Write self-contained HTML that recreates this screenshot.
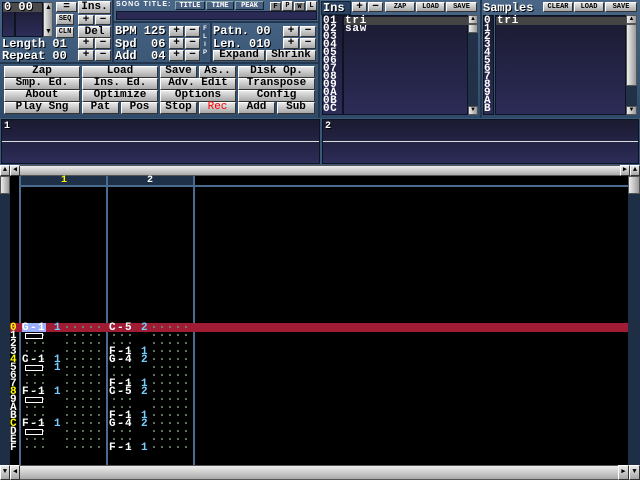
<!DOCTYPE html><html><head><style>
*{margin:0;padding:0;box-sizing:border-box}
body{width:640px;height:480px;background:#000;position:relative;overflow:hidden;font-family:"Liberation Sans",sans-serif}
div{position:absolute}
.pn{background:linear-gradient(#4a6788,#2f4a68);}
.b{background:linear-gradient(#e8e8e8,#a8a8a8);border:1px solid;border-color:#fff #333 #333 #fff;font-weight:bold;font-size:11px;text-align:center;color:#000;line-height:9px;font-family:"Liberation Mono",monospace;letter-spacing:0px}
.s{font-size:7px;line-height:8px}
.t{color:#fff;font-weight:bold;font-size:12px;font-family:"Liberation Mono",monospace;text-shadow:1px 1px 0 #000;line-height:12px;white-space:pre}
.lst{background:linear-gradient(#1a1a30,#2c2c58);border:1px solid #0c1424}
.m{font-family:"Liberation Mono",monospace;font-size:12px;line-height:8px;letter-spacing:.8px;white-space:pre;color:#fff;font-weight:bold}
.sb{background:linear-gradient(90deg,#eee,#999);border:1px solid #555}
.n{font-family:"Liberation Mono",monospace;font-size:11px;line-height:8px;letter-spacing:1.4px;white-space:pre;color:#fff;font-weight:bold}
.n i{font-style:normal;color:#7cf}
.d{background-image:radial-gradient(circle at 1px 4px,#6a8a6a 0.8px,transparent 1.2px);background-size:8px 8px}
</style></head><body>
<div class="pn" style="left:0;top:0;width:640px;height:118px"></div>
<div style="left:0;top:62px;width:320px;height:2px;background:#223650"></div>
<div style="left:112px;top:0;width:2px;height:62px;background:#223650"></div>
<div style="left:210px;top:22px;width:2px;height:40px;background:#223650"></div>
<div style="left:113px;top:21px;width:207px;height:2px;background:#223650"></div>
<div style="left:318px;top:0;width:2px;height:118px;background:#223650"></div>
<div style="left:480px;top:0;width:2px;height:118px;background:#223650"></div>
<div class="lst" style="left:2px;top:2px;width:13px;height:35px"></div>
<div class="lst" style="left:15px;top:2px;width:28px;height:35px"></div>
<div style="left:3px;top:3px;width:39px;height:9px;background:#4a4a4a"></div>
<div class="t" style="left:4px;top:1px">0 00</div>
<div class="sb" style="left:43px;top:2px;width:10px;height:35px"></div>
<div style="left:45px;top:4px;color:#000;font-size:7px">▲</div>
<div style="left:45px;top:28px;color:#000;font-size:7px">▼</div>
<div class="b" style="left:56px;top:2px;width:21px;height:10px">=</div>
<div class="b" style="left:78px;top:1px;width:33px;height:13px;line-height:11px">Ins.</div>
<div class="b s" style="left:56px;top:14px;width:18px;height:11px">SEQ</div>
<div class="b" style="left:78px;top:15px;width:16px;height:10px">+</div>
<div class="b" style="left:95px;top:15px;width:16px;height:10px">−</div>
<div class="b s" style="left:56px;top:27px;width:18px;height:11px">CLN</div>
<div class="b" style="left:78px;top:26px;width:33px;height:12px;line-height:10px">Del</div>
<div class="t" style="left:2px;top:38px">Length 01</div>
<div class="t" style="left:2px;top:50px">Repeat 00</div>
<div class="b" style="left:78px;top:38px;width:16px;height:11px">+</div><div class="b" style="left:95px;top:38px;width:16px;height:11px">−</div>
<div class="b" style="left:78px;top:50px;width:16px;height:11px">+</div><div class="b" style="left:95px;top:50px;width:16px;height:11px">−</div>
<div style="left:116px;top:1px;color:#fff;font-size:7px;font-weight:bold;letter-spacing:1px">SONG TITLE:</div>
<div class="b s" style="left:175px;top:1px;width:30px;height:9px;background:#4a6080;color:#fff;border-color:#8aa #123 #123 #8aa">TITLE</div>
<div class="b s" style="left:206px;top:1px;width:28px;height:9px;background:#4a6080;color:#fff;border-color:#8aa #123 #123 #8aa">TIME</div>
<div class="b s" style="left:235px;top:1px;width:29px;height:9px;background:#4a6080;color:#fff;border-color:#8aa #123 #123 #8aa">PEAK</div>
<div class="b s" style="left:270px;top:2px;width:11px;height:9px;background:#888">F</div>
<div class="b s" style="left:282px;top:1px;width:11px;height:10px">P</div>
<div class="b s" style="left:294px;top:2px;width:11px;height:9px;background:#888">W</div>
<div class="b s" style="left:306px;top:1px;width:11px;height:10px">L</div>
<div style="left:116px;top:11px;width:201px;height:9px;background:#2a2a55;border:1px solid #101830"></div>
<div class="t" style="left:115px;top:25px">BPM 125</div>
<div class="t" style="left:115px;top:38px">Spd  06</div>
<div class="t" style="left:115px;top:50px">Add  04</div>
<div class="b" style="left:169px;top:26px;width:15px;height:11px">+</div><div class="b" style="left:185px;top:26px;width:15px;height:11px">−</div>
<div class="b" style="left:169px;top:38px;width:15px;height:11px">+</div><div class="b" style="left:185px;top:38px;width:15px;height:11px">−</div>
<div class="b" style="left:169px;top:50px;width:15px;height:11px">+</div><div class="b" style="left:185px;top:50px;width:15px;height:11px">−</div>
<div style="left:201px;top:25px;width:8px;height:36px;background:#3a5474;color:#fff;font-size:6px;line-height:8px;text-align:center;font-weight:bold">F<br>L<br>I<br>P</div>
<div class="t" style="left:213px;top:25px">Patn. 00</div>
<div class="t" style="left:213px;top:38px">Len. 010</div>
<div class="b" style="left:283px;top:26px;width:16px;height:11px">+</div><div class="b" style="left:300px;top:26px;width:16px;height:11px">−</div>
<div class="b" style="left:283px;top:38px;width:16px;height:11px">+</div><div class="b" style="left:300px;top:38px;width:16px;height:11px">−</div>
<div class="b" style="left:213px;top:50px;width:52px;height:11px">Expand</div>
<div class="b" style="left:266px;top:50px;width:50px;height:11px">Shrink</div>
<div class="b" style="left:4px;top:66px;width:76px;height:12px">Zap</div>
<div class="b" style="left:82px;top:66px;width:76px;height:12px">Load</div>
<div class="b" style="left:160px;top:66px;width:37px;height:12px">Save</div>
<div class="b" style="left:199px;top:66px;width:37px;height:12px">As..</div>
<div class="b" style="left:238px;top:66px;width:77px;height:12px">Disk Op.</div>
<div class="b" style="left:4px;top:78px;width:76px;height:12px">Smp. Ed.</div>
<div class="b" style="left:82px;top:78px;width:76px;height:12px">Ins. Ed.</div>
<div class="b" style="left:160px;top:78px;width:76px;height:12px">Adv. Edit</div>
<div class="b" style="left:238px;top:78px;width:77px;height:12px">Transpose</div>
<div class="b" style="left:4px;top:90px;width:76px;height:12px">About</div>
<div class="b" style="left:82px;top:90px;width:76px;height:12px">Optimize</div>
<div class="b" style="left:160px;top:90px;width:76px;height:12px">Options</div>
<div class="b" style="left:238px;top:90px;width:77px;height:12px">Config</div>
<div class="b" style="left:4px;top:102px;width:76px;height:12px">Play Sng</div>
<div class="b" style="left:82px;top:102px;width:37px;height:12px">Pat</div>
<div class="b" style="left:121px;top:102px;width:37px;height:12px">Pos</div>
<div class="b" style="left:160px;top:102px;width:37px;height:12px">Stop</div>
<div class="b" style="left:199px;top:102px;width:37px;height:12px;color:#f00;font-weight:normal">Rec</div>
<div class="b" style="left:238px;top:102px;width:37px;height:12px">Add</div>
<div class="b" style="left:277px;top:102px;width:38px;height:12px">Sub</div>
<div style="left:321px;top:1px;width:30px;height:14px;background:#2a4060;border:1px solid #123"></div>
<div class="t" style="left:323px;top:2px">Ins</div>
<div class="b" style="left:352px;top:2px;width:15px;height:10px">+</div>
<div class="b" style="left:368px;top:2px;width:15px;height:10px">−</div>
<div class="b s" style="left:385px;top:2px;width:30px;height:10px">ZAP</div>
<div class="b s" style="left:416px;top:2px;width:29px;height:10px">LOAD</div>
<div class="b s" style="left:446px;top:2px;width:31px;height:10px">SAVE</div>
<div class="lst" style="left:322px;top:15px;width:21px;height:100px"></div>
<div class="lst" style="left:343px;top:15px;width:125px;height:100px"></div>
<div style="left:344px;top:17px;width:124px;height:8px;background:#444"></div>
<div class="m" style="left:323px;top:17px;font-size:11px;letter-spacing:.5px">01
02
03
04
05
06
07
08
09
0A
0B
0C</div>
<div class="m" style="left:345px;top:17px;font-size:11px">tri
saw</div>
<div style="left:468px;top:15px;width:10px;height:100px;background:#223048"></div>
<div class="sb" style="left:468px;top:15px;width:10px;height:9px;font-size:6px;text-align:center;color:#000">▲</div>
<div class="sb" style="left:468px;top:24px;width:10px;height:9px"></div>
<div class="sb" style="left:468px;top:106px;width:10px;height:9px;font-size:6px;text-align:center;color:#000">▼</div>
<div class="t" style="left:483px;top:2px">Samples</div>
<div class="b s" style="left:543px;top:2px;width:30px;height:10px">CLEAR</div>
<div class="b s" style="left:574px;top:2px;width:30px;height:10px">LOAD</div>
<div class="b s" style="left:605px;top:2px;width:32px;height:10px">SAVE</div>
<div class="lst" style="left:483px;top:15px;width:11px;height:100px"></div>
<div class="lst" style="left:495px;top:15px;width:131px;height:100px"></div>
<div style="left:496px;top:17px;width:130px;height:8px;background:#444"></div>
<div class="m" style="left:484px;top:17px;font-size:11px">0
1
2
3
4
5
6
7
8
9
A
B</div>
<div class="m" style="left:497px;top:17px;font-size:11px">tri</div>
<div style="left:626px;top:15px;width:11px;height:100px;background:#223048"></div>
<div class="sb" style="left:626px;top:15px;width:11px;height:9px;font-size:6px;text-align:center;color:#000">▲</div>
<div class="sb" style="left:626px;top:24px;width:11px;height:62px"></div>
<div class="sb" style="left:626px;top:106px;width:11px;height:9px;font-size:6px;text-align:center;color:#000">▼</div>
<div class="pn" style="left:0;top:118px;width:640px;height:47px;background:#3a5878"></div>
<div class="lst" style="left:1px;top:119px;width:319px;height:45px"></div>
<div class="lst" style="left:322px;top:119px;width:317px;height:45px"></div>
<div style="left:2px;top:141px;width:317px;height:1px;background:#ddd"></div>
<div style="left:323px;top:141px;width:315px;height:1px;background:#ddd"></div>
<div class="t" style="left:4px;top:121px;font-size:10px">1</div>
<div class="t" style="left:325px;top:121px;font-size:10px">2</div>
<div class="sb" style="left:0;top:165px;width:640px;height:11px;background:linear-gradient(#eee,#aaa)"></div>
<div class="b s" style="left:0;top:165px;width:10px;height:11px">▲</div>
<div class="b s" style="left:10px;top:165px;width:10px;height:11px">◀</div>
<div class="b s" style="left:620px;top:165px;width:10px;height:11px">▶</div>
<div class="b s" style="left:630px;top:165px;width:10px;height:11px">▲</div>
<div style="left:0;top:176px;width:10px;height:289px;background:#1e2e44"></div>
<div class="sb" style="left:0;top:176px;width:10px;height:18px"></div>
<div style="left:628px;top:176px;width:12px;height:289px;background:#1e2e44"></div>
<div class="sb" style="left:628px;top:176px;width:12px;height:18px"></div>
<div style="left:20px;top:176px;width:173px;height:10px;background:#1e3048"></div>
<div style="left:20px;top:185px;width:608px;height:2px;background:#4a6a90"></div>
<div style="left:19px;top:176px;width:2px;height:289px;background:#4a6a90"></div>
<div style="left:106px;top:176px;width:2px;height:289px;background:#4a6a90"></div>
<div style="left:193px;top:176px;width:2px;height:289px;background:#4a6a90"></div>
<div class="m" style="left:61px;top:177px;color:#ff0;font-size:10px">1</div>
<div class="m" style="left:147px;top:177px;font-size:10px">2</div>
<div style="left:10px;top:323px;width:618px;height:9px;background:#a01c34"></div>
<div style="left:22px;top:323px;width:24px;height:9px;background:#9cb0ff"></div>
<div class="d" style="left:66px;top:323px;width:40px;height:128px"></div>
<div class="d" style="left:153px;top:323px;width:40px;height:128px"></div>
<div class="d" style="left:26px;top:331px;width:24px;height:120px"></div>
<div class="d" style="left:113px;top:331px;width:24px;height:120px"></div>
<div class="n" style="left:10px;top:324px;letter-spacing:0"><span style="color:#ff0">0</span>
1
2
3
<span style="color:#ff0">4</span>
5
6
7
<span style="color:#ff0">8</span>
9
A
B
<span style="color:#ff0">C</span>
D
E
F</div>
<div class="n" style="left:22px;top:324px">G-1 <i>1</i>



C-1 <i>1</i>
    <i>1</i>


F-1 <i>1</i>



F-1 <i>1</i></div>
<div style="left:25px;top:333px;width:18px;height:6px;border:1px solid #fff;background:#000"></div>
<div style="left:25px;top:365px;width:18px;height:6px;border:1px solid #fff;background:#000"></div>
<div style="left:25px;top:397px;width:18px;height:6px;border:1px solid #fff;background:#000"></div>
<div style="left:25px;top:429px;width:18px;height:6px;border:1px solid #fff;background:#000"></div>
<div class="n" style="left:109px;top:324px">C-5 <i>2</i>


F-1 <i>1</i>
G-4 <i>2</i>


F-1 <i>1</i>
C-5 <i>2</i>


F-1 <i>1</i>
G-4 <i>2</i>


F-1 <i>1</i></div>
<div class="sb" style="left:0;top:465px;width:640px;height:15px;background:linear-gradient(#eee,#aaa)"></div>
<div class="b s" style="left:0;top:465px;width:10px;height:15px;line-height:13px">▼</div>
<div class="b s" style="left:10px;top:465px;width:10px;height:15px;line-height:13px">◀</div>
<div class="b s" style="left:618px;top:465px;width:11px;height:15px;line-height:13px">▶</div>
<div class="b s" style="left:629px;top:465px;width:11px;height:15px;line-height:13px">▼</div>
</body></html>
